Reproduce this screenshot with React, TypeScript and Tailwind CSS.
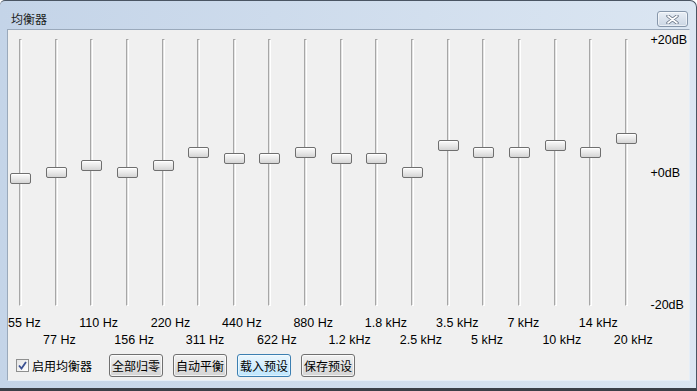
import React from "react";

const values = [-1, 0, 1, 0, 1, 3, 2, 2, 3, 2, 2, 0, 4, 3, 3, 4, 3, 5];
const row1 = ["55 Hz", "110 Hz", "220 Hz", "440 Hz", "880 Hz", "1.8 kHz", "3.5 kHz", "7 kHz", "14 kHz"];
const row2 = ["77 Hz", "156 Hz", "311 Hz", "622 Hz", "1.2 kHz", "2.5 kHz", "5 kHz", "10 kHz", "20 kHz"];

function Slider({ value }: { value: number }) {
    // track is 267px tall, centre (0dB) at 133px
    const top = 133 - value * 6.65 - 5.5;
    return (
        <div className="relative w-[35.65px] h-[267px] shrink-0">
            <div className="ml-[11px] h-full w-[3px] border-l border-t border-[#a6a6a6] border-r border-r-white border-b border-b-white bg-[#e4e4e4]" />
            <div
                className="absolute left-[2px] w-[21px] h-[11px] rounded-[2px] border border-[#6f6f6f] bg-linear-to-b from-[#fbfbfb] via-[#e9e9e9] to-[#d4d4d4] shadow-[inset_0_1px_0_#ffffff]"
                style={{ top }}
            />
        </div>
    );
}

function Button({ label, focused }: { label: string; focused?: boolean }) {
    return (
        <button
            className={
                focused
                    ? "w-[54px] h-[23px] rounded-[3px] border border-[#3c7fb1] bg-linear-to-b from-[#eaf6fd] to-[#bee6fd] shadow-[inset_0_0_0_1px_#ffffff80] text-[12px] leading-none text-black"
                    : "w-[54px] h-[23px] rounded-[3px] border border-[#707070] bg-linear-to-b from-[#f2f2f2] to-[#d3d3d3] shadow-[inset_0_0_0_1px_#ffffffb0] text-[12px] leading-none text-black"
            }
        >
            {label}
        </button>
    );
}

export default function App() {
    return (
        <div className="w-[697px] h-[391px] overflow-hidden font-['Liberation_Sans','Noto_Sans_CJK_SC',sans-serif] text-black">
            <div className="w-full h-full flex flex-col rounded-tr-[7px] rounded-tl-[5px] border-t border-r border-[#4a5563] border-b-[3px] border-b-[#3b4048] bg-linear-to-r from-[#c4d4e8] to-[#dbe6f2]">
                {/* Title bar */}
                <div className="h-[28px] shrink-0 flex items-center pl-[11px] pr-[8px]">
                    <span className="text-[12px] text-[#1e1e1e] mt-[8px] font-['Noto_Sans_CJK_SC',sans-serif]">均衡器</span>
                    <div className="ml-auto mt-[8px] w-[31px] h-[16px] rounded-[3px] border border-[#8797ab] bg-linear-to-b from-[#e9eff6] to-[#cbd6e4] flex items-center justify-center shadow-[inset_0_0_0_1px_#ffffff90]">
                        <svg width="13" height="9" viewBox="0 0 13 9">
                            <path d="M2 1 L11 8 M11 1 L2 8" stroke="#6b7788" strokeWidth="3.4" strokeLinecap="round" />
                            <path d="M2 1 L11 8 M11 1 L2 8" stroke="#ffffff" strokeWidth="1.6" strokeLinecap="round" />
                        </svg>
                    </div>
                </div>

                {/* Client area */}
                <div className="ml-[7px] mr-[6px] mb-[7px] flex-1 flex flex-col border border-[#9aa9bb] border-r-[#e6eef7] border-b-[#e6eef7] bg-[#f0f0f0]">
                    <div className="flex h-[282px]">
                        <div className="flex pt-[9px]">
                            {values.map((v, i) => (
                                <Slider key={i} value={v} />
                            ))}
                        </div>
                        <div className="flex flex-col justify-between pt-[3px] pl-[1px] h-[282px] text-[12.5px] leading-[14px]">
                            <span>+20dB</span>
                            <span>+0dB</span>
                            <span>-20dB</span>
                        </div>
                    </div>

                    <div className="mt-[3px] grid grid-cols-[repeat(9,71.35px)] h-[17px] text-[12.5px] leading-[17px]">
                        {row1.map((t) => (
                            <span key={t}>{t}</span>
                        ))}
                    </div>
                    <div className="pl-[35px] grid grid-cols-[repeat(9,71.35px)] h-[17px] text-[12.5px] leading-[17px]">
                        {row2.map((t) => (
                            <span key={t}>{t}</span>
                        ))}
                    </div>

                    <div className="mt-[5px] flex items-center h-[23px] font-['Noto_Sans_CJK_SC',sans-serif]">
                        <div className="w-[101px] pl-[8px] flex items-center gap-[3px]">
                            <div className="w-[13px] h-[13px] border border-[#8e8f8f] bg-linear-to-br from-[#e4e4e4] to-[#ffffff] flex items-center justify-center">
                                <svg width="9" height="9" viewBox="0 0 9 9">
                                    <path d="M1 4.5 L3.5 7.5 L8 1" fill="none" stroke="#3b5192" strokeWidth="1.8" />
                                </svg>
                            </div>
                            <span className="text-[12px] leading-none">启用均衡器</span>
                        </div>
                        <div className="flex gap-[10px]">
                            <Button label="全部归零" />
                            <Button label="自动平衡" />
                            <Button label="载入预设" focused />
                            <Button label="保存预设" />
                        </div>
                    </div>
                </div>
            </div>
        </div>
    );
}
